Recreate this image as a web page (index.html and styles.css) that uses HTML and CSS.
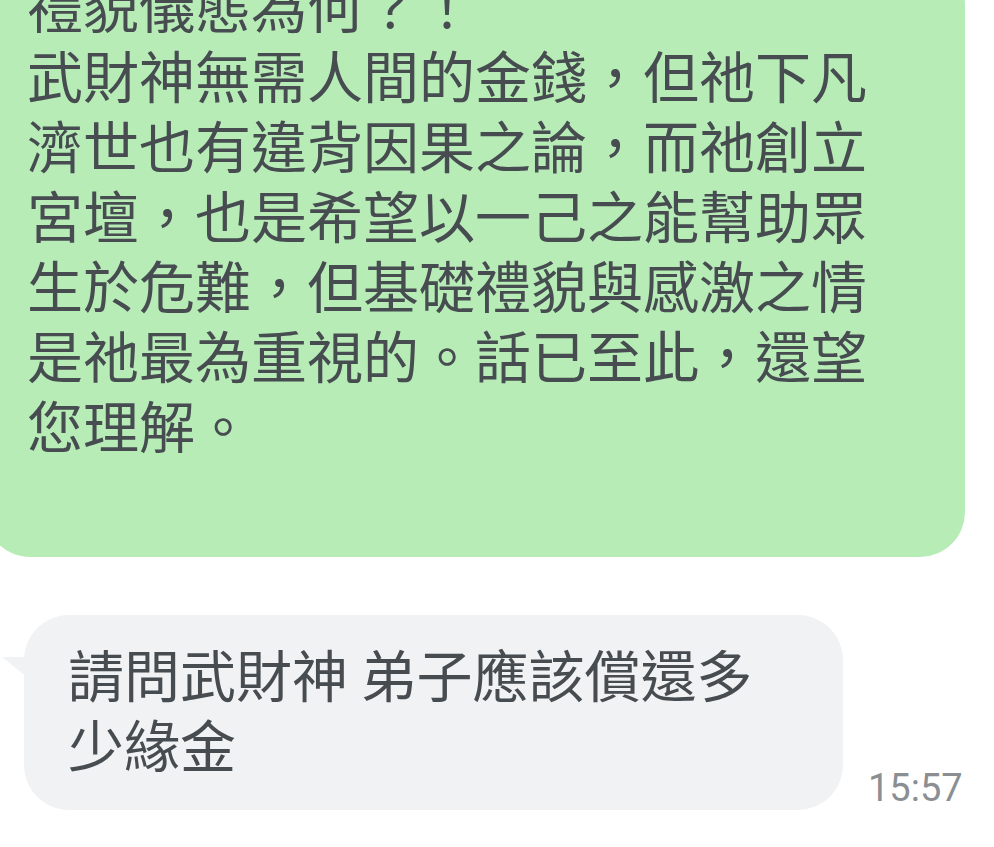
FILE: index.html
```html
<!DOCTYPE html>
<html lang="zh-Hant">
<head>
    <meta charset="UTF-8" />
    <meta name="viewport" content="width=device-width, initial-scale=1.0" />
    <title>聊天</title>
    <link rel="stylesheet" href="styles.css">
</head>
<body>
    <div class="chat">
        <!-- ===== 已送出的訊息 ===== -->
        <div class="msg msg-out">
            <div class="bubble bubble-out">禮貌儀態為何？！<br>武財神無需人間的金錢，但祂下凡濟世也有違背因果之論，而祂創立宮壇，也是希望以一己之能幫助眾生於危難，但基礎禮貌與感激之情是祂最為重視的。話已至此，還望您理解。</div>
        </div>

        <!-- ===== 收到的訊息 ===== -->
        <div class="msg msg-in">
            <div class="bubble bubble-in">請問武財神 弟子應該償還多少緣金</div>
            <span class="time">15:57</span>
        </div>
    </div>
</body>
</html>
```

FILE: styles.css
```css
:root {
    --green: #b7ecb7;
    --grey: #f1f2f4;
    --text: #464c50;
    --time: #8b8f93;
}

body {
    margin: 0;
    background: #fff;
    overflow: hidden;
    font-family: "Noto Sans CJK TC", "Noto Sans", sans-serif;
    color: var(--text);
}

.chat {
    display: flex;
    flex-direction: column;
}

.msg {
    display: flex;
    align-items: flex-end;
}

.bubble {
    font-size: 56px;
    line-height: 70px;
}

/* ===== Burbuja verde ===== */
.bubble-out {
    width: 840px;
    margin: -40px 0 0 -15px;
    padding: 9px 98px 98px 42px;
    background: var(--green);
    border-radius: 45px;
}

/* ===== Burbuja gris ===== */
.msg-in {
    margin-top: 58px;
}
.bubble-in {
    position: relative;
    width: 695px;
    margin-left: 24px;
    padding: 23px 80px 32px 44px;
    background: var(--grey);
    border-radius: 45px;
}
.bubble-in::before {
    content: "";
    position: absolute;
    left: -22px;
    top: 42px;
    width: 0;
    height: 0;
    border-top: 0 solid transparent;
    border-right: 30px solid var(--grey);
    border-bottom: 24px solid transparent;
}

.time {
    margin: 0 0 3px 25px;
    font-family: Roboto, sans-serif;
    font-size: 38px;
    line-height: 1;
    color: var(--time);
}
```
